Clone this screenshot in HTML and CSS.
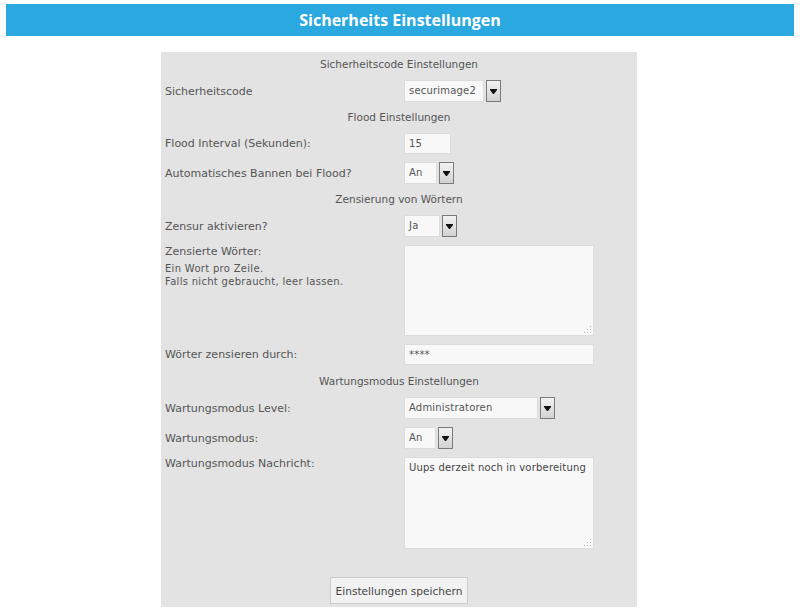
FILE: index.html
```html
<!DOCTYPE html>
<html lang="de">
<head>
<meta charset="utf-8">
<title>Sicherheits Einstellungen</title>
<link rel="stylesheet" href="styles.css">
</head>
<body>
<header class="topbar"><h1>Sicherheits Einstellungen</h1></header>
<form class="panel">
  <div class="section">Sicherheitscode Einstellungen</div>
  <div class="row">
    <label>Sicherheitscode</label>
    <div class="select w-code"><span class="val">securimage2</span><span class="arr"><svg width="7" height="5" viewBox="0 0 7 5"><path d="M0 0h7v1l-3 4h-1l-3-4z" fill="#111"/></svg></span></div>
  </div>
  <div class="section">Flood Einstellungen</div>
  <div class="row">
    <label>Flood Interval (Sekunden):</label>
    <input class="text w-num" type="text" value="15">
  </div>
  <div class="row">
    <label>Automatisches Bannen bei Flood?</label>
    <div class="select w-an"><span class="val">An</span><span class="arr"><svg width="7" height="5" viewBox="0 0 7 5"><path d="M0 0h7v1l-3 4h-1l-3-4z" fill="#111"/></svg></span></div>
  </div>
  <div class="section">Zensierung von Wörtern</div>
  <div class="row">
    <label>Zensur aktivieren?</label>
    <div class="select w-ja"><span class="val">Ja</span><span class="arr"><svg width="7" height="5" viewBox="0 0 7 5"><path d="M0 0h7v1l-3 4h-1l-3-4z" fill="#111"/></svg></span></div>
  </div>
  <div class="row top">
    <div class="lab">
      <label>Zensierte Wörter:</label>
      <p class="hint">Ein Wort pro Zeile.<br>Falls nicht gebraucht, leer lassen.</p>
    </div>
    <div class="area"><textarea></textarea><span class="grip"><svg width="7" height="7" viewBox="0 0 7 7" fill="#b8b8b8"><rect x="6" y="0" width="1" height="1"/><rect x="6" y="3" width="1" height="1"/><rect x="3" y="3" width="1" height="1"/><rect x="6" y="6" width="1" height="1"/><rect x="3" y="6" width="1" height="1"/><rect x="0" y="6" width="1" height="1"/></svg></span></div>
  </div>
  <div class="row">
    <label>Wörter zensieren durch:</label>
    <input class="text w-wide" type="text" value="****">
  </div>
  <div class="section last">Wartungsmodus Einstellungen</div>
  <div class="row">
    <label>Wartungsmodus Level:</label>
    <div class="select w-level"><span class="val">Administratoren</span><span class="arr"><svg width="7" height="5" viewBox="0 0 7 5"><path d="M0 0h7v1l-3 4h-1l-3-4z" fill="#111"/></svg></span></div>
  </div>
  <div class="row">
    <label>Wartungsmodus:</label>
    <div class="select w-an2"><span class="val">An</span><span class="arr"><svg width="7" height="5" viewBox="0 0 7 5"><path d="M0 0h7v1l-3 4h-1l-3-4z" fill="#111"/></svg></span></div>
  </div>
  <div class="row top">
    <label class="lab">Wartungsmodus Nachricht:</label>
    <div class="area tall"><textarea>Uups derzeit noch in vorbereitung</textarea><span class="grip"><svg width="7" height="7" viewBox="0 0 7 7" fill="#b8b8b8"><rect x="6" y="0" width="1" height="1"/><rect x="6" y="3" width="1" height="1"/><rect x="3" y="3" width="1" height="1"/><rect x="6" y="6" width="1" height="1"/><rect x="3" y="6" width="1" height="1"/><rect x="0" y="6" width="1" height="1"/></svg></span></div>
  </div>
  <div class="actions"><button type="button" class="btn">Einstellungen speichern</button></div>
</form>
</body>
</html>
```
FILE: styles.css
```css
* { box-sizing: border-box; }
html, body { background: #ffffff; }
body {
  margin: 0;
  padding: 4px 6px;
  font-family: "DejaVu Sans", Verdana, sans-serif;
  font-size: 11px;
  color: #555555;
}
.topbar {
  height: 32px;
  background: #2aa8e0;
  display: flex;
  align-items: center;
  justify-content: center;
}
.topbar h1 {
  margin: 0;
  font-family: "Open Sans", sans-serif;
  font-weight: 700;
  font-size: 16px;
  color: #ffffff;
}
.panel {
  width: 476px;
  margin: 16px auto 0;
  position: relative;
  left: -1px;
  background: #e3e3e3;
  padding: 1px 0 3px 4px;
}
.section {
  height: 23px;
  line-height: 23px;
  text-align: center;
  padding-right: 4px;
  font-size: 10.5px;
}
.section.last { height: 24px; line-height: 24px; }
.row {
  display: grid;
  grid-template-columns: 239px 1fr;
  align-items: center;
  padding: 4px 0;
}
.row.top { align-items: start; }
.lab, .row.top label { line-height: 14px; }
.hint {
  margin: 3px 0 0;
  font-size: 10px;
  line-height: 13px;
  letter-spacing: 0.3px;
}
.select {
  display: flex;
  height: 22px;
  gap: 2px;
}
.select .val {
  flex: 1;
  background: #f8f8f8;
  border: 1px solid #dcdcdc;
  line-height: 20px;
  padding-left: 4px;
  font-size: 10px;
  letter-spacing: 0.2px;
  color: #555;
  white-space: nowrap;
  overflow: hidden;
}
.select .arr {
  width: 15px;
  border: 1px solid #7a7a7a;
  background: linear-gradient(#f2f2f2, #d2d2d2);
  display: flex;
  align-items: center;
  justify-content: center;
}
.w-code { width: 97px; }
.w-an { width: 50px; }
.w-ja { width: 53px; }
.w-level { width: 151px; }
.w-an2 { width: 49px; }
.text {
  height: 21px;
  border: 1px solid #dcdcdc;
  background: #f8f8f8;
  font-family: "DejaVu Sans", Verdana, sans-serif;
  font-size: 10px;
  letter-spacing: 0.2px;
  color: #555;
  padding: 0 4px;
  margin: 0;
  outline: none;
}
.w-num { width: 47px; }
.w-wide { width: 190px; }
.area {
  position: relative;
  width: 190px;
  height: 91px;
}
.area.tall { height: 92px; }
.area textarea {
  display: block;
  width: 100%;
  height: 100%;
  resize: none;
  overflow: hidden;
  border: 1px solid #dcdcdc;
  background: #f8f8f8;
  font-family: "DejaVu Sans", Verdana, sans-serif;
  font-size: 10px;
  line-height: 13px;
  letter-spacing: 0.2px;
  color: #444;
  padding: 3px 2px 3px 4px;
  margin: 0;
  outline: none;
}
.grip {
  position: absolute;
  right: 3px;
  bottom: 3px;
  width: 7px;
  height: 7px;
  display: flex;
}
.actions {
  display: flex;
  justify-content: center;
  padding: 24px 4px 0 0;
}
.btn {
  width: 138px;
  height: 27px;
  background: #f2f2f2;
  border: 1px solid #cccccc;
  border-radius: 0;
  font-family: "DejaVu Sans", Verdana, sans-serif;
  font-size: 10.6px;
  color: #444;
  padding: 0;
}
```
